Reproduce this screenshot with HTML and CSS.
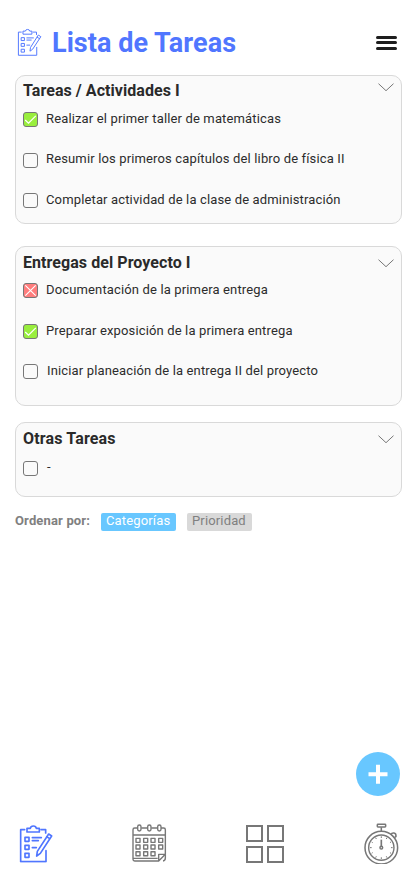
FILE: index.html
```html
<!DOCTYPE html>
<html lang="es">
<head>
<meta charset="utf-8">
<meta name="viewport" content="width=device-width">
<title>Lista de Tareas</title>
<link rel="stylesheet" href="styles.css">
</head>
<body>
<svg class="defs" width="0" height="0">
  <symbol id="clipboard" viewBox="26 26 102 116">
    <g fill="none" stroke="currentColor" stroke-linejoin="round" stroke-linecap="round">
      <path d="M43 43H31V139H107V106M92 43H106V53"/>
      <path d="M50 50V39H60Q61 32 69 32T78 39H87V50Z"/>
      <path d="M44 66h12v12h-12zM44 90h12v12h-12zM44 114h12v12h-12z"/>
      <path d="M66 67H93M66 76H84M66 97H78"/>
      <path d="M115 56L124 62L90 114L79 122L81 108ZM109 64L118 70"/>
    </g>
  </symbol>
  <symbol id="chevron" viewBox="0 0 16 9"><path d="M.5 .7L8 7.7L15.5 .7" fill="none" stroke="#777" stroke-width="1"/></symbol>
  <symbol id="check" viewBox="0 0 15 15"><path d="M2.2 8L5.5 11.2L12.8 3.8" fill="none" stroke="#fff" stroke-width="1.2"/></symbol>
  <symbol id="cross" viewBox="0 0 15 15"><path d="M2.3 2.3L12.7 12.7M12.7 2.3L2.3 12.7" fill="none" stroke="#fff" stroke-width="1.1"/></symbol>
</svg>
<div class="screen">
  <header class="top">
    <svg class="logo"><use href="#clipboard"/></svg>
    <h1>Lista de Tareas</h1>
    <div class="menu"><i></i><i></i><i></i></div>
  </header>

  <section class="card first">
    <div class="head"><h2>Tareas / Actividades I</h2><svg class="chev"><use href="#chevron"/></svg></div>
    <div class="row"><span class="box done"><svg><use href="#check"/></svg></span><p>Realizar el primer taller de matemáticas</p></div>
    <div class="row"><span class="box"></span><p>Resumir los primeros capítulos del libro de física II</p></div>
    <div class="row"><span class="box"></span><p>Completar actividad de la clase de administración</p></div>
  </section>

  <section class="card second">
    <div class="head"><h2>Entregas del Proyecto I</h2><svg class="chev"><use href="#chevron"/></svg></div>
    <div class="row"><span class="box failed"><svg><use href="#cross"/></svg></span><p>Documentación de la primera entrega</p></div>
    <div class="row"><span class="box done"><svg><use href="#check"/></svg></span><p>Preparar exposición de la primera entrega</p></div>
    <div class="row indent"><span class="box"></span><p>Iniciar planeación de la entrega II del proyecto</p></div>
  </section>

  <section class="card third">
    <div class="head"><h2>Otras Tareas</h2><svg class="chev"><use href="#chevron"/></svg></div>
    <div class="row indent"><span class="box"></span><p>-</p></div>
  </section>

  <div class="sort">
    <b>Ordenar por:</b>
    <span class="chip active">Categorías</span>
    <span class="chip">Prioridad</span>
  </div>

  <div class="add"><svg viewBox="0 0 44 44"><path d="M22 12.7V31.7M12.5 22.2H31.5" stroke="#fff" stroke-width="4"/></svg></div>

  <nav class="tabs">
    <svg class="tab-list"><use href="#clipboard"/></svg>
    <svg class="tab-cal" viewBox="35 28 104 116">
      <g fill="none" stroke="#777" stroke-width="4.2" stroke-linejoin="round">
        <path d="M51 40H43Q38 40 38 45V134Q38 139 43 139H115L135 119V45Q135 40 130 40H122M63 40H81M93 40H111M38 61H135M38 131H112M115 139V119H135"/>
        <rect x="52" y="31" width="10" height="18" rx="5"/><rect x="82" y="31" width="10" height="18" rx="5"/><rect x="112" y="31" width="10" height="18" rx="5"/>
        <path d="M47 71h12v12h-12zM70 71h12v12h-12zM92 71h12v12h-12zM115 71h12v12h-12zM47 91h12v12h-12zM70 91h12v12h-12zM92 91h12v12h-12zM115 91h12v12h-12zM47 111h12v12h-12zM70 111h12v12h-12zM92 111h12v12h-12z"/>
        <path d="M128 139Q135 138 135 130V119"/>
      </g>
    </svg>
    <div class="tab-grid"><i></i><i></i><i></i><i></i></div>
    <svg class="tab-timer" viewBox="28 24 106 124">
      <g fill="none" stroke="#777" stroke-width="4.6">
        <circle cx="80" cy="98" r="49"/><circle cx="80" cy="98" r="38" stroke-width="4.2"/>
        <rect x="68" y="28" width="25" height="8" rx="2"/>
        <path d="M80 37V49M109 59Q111 53 118 54T124 65L119 68"/>
        <path d="M80 64V69M80 127V132M46 98H51M109 98H114M63 68L65 72M97 68L95 72M51 81L54 83M109 81L106 83M51 115L54 113M109 115L106 113M63 128L65 124M97 128L95 124" stroke-width="3"/>
        <path d="M80 74V94" stroke-width="5"/><circle cx="80" cy="98" r="4"/>
      </g>
    </svg>
  </nav>
</div>
</body>
</html>
```

FILE: styles.css
```css
* { box-sizing: border-box; margin: 0; padding: 0; }
body { background: #fff; font-family: Roboto, "Liberation Sans", sans-serif; }
.defs { display: block; }
.screen { width: 414px; height: 896px; display: flex; flex-direction: column; overflow: hidden; }
svg { display: block; flex: none; }

.top { height: 75px; padding: 28px 17px 0 17px; display: flex; align-items: flex-start; }
.logo { width: 25px; height: 28px; color: #5076ff; stroke-width: 4; }
h1 { margin-left: 10px; font-size: 27px; line-height: 30px; letter-spacing: .04px; font-weight: 700; color: #5076ff; white-space: nowrap; }
.menu { margin-left: auto; padding-top: 7.5px; width: 21px; display: flex; flex-direction: column; gap: 2.5px; }
.menu i { height: 3.2px; border-radius: 2px; background: #1e1e1e; }

.card { flex: none; margin: 0 12px 0 15px; border: 1px solid #d9d9d9; border-radius: 10px; background: #fafafa; padding: 0 7px; }
.first { height: 149px; }
.second { height: 160px; margin-top: 22px; }
.third { height: 75px; margin-top: 16px; }
.head { height: 34px; padding-top: 5px; display: flex; justify-content: space-between; }
.second .head { height: 34px; padding-top: 6px; }
.third .head { height: 33px; padding-top: 6px; }
h2 { font-size: 16px; line-height: 20px; letter-spacing: .06px; font-weight: 700; color: #2a2a2a; white-space: nowrap; }
.third h2 { letter-spacing: .15px; }
.chev { width: 16px; height: 9px; margin-top: 2px; }
.second .chev, .third .chev { margin-top: 6px; }
.row { height: 40.4px; display: flex; align-items: flex-start; }
.second .row { height: 40.7px; }
.box { flex: none; width: 15px; height: 15px; margin-top: 2.5px; border: 1px solid #777; border-radius: 3px; }
.first .row:nth-child(2) .box, .second .box { margin-top: 2px; }
.third .box { margin-top: 5px; }
.box svg { width: 15px; height: 15px; margin: -1px; }
.done { background: #99ee3d; }
.failed { background: #ff7d7d; }
.row p { margin-left: 8px; font-size: 13px; line-height: 17px; letter-spacing: .145px; color: #2c2c2c; white-space: nowrap; }
.indent p { margin-left: 9px; }
.third .row p { line-height: 21px; }

.sort { flex: none; height: 35px; margin: 16px 0 0 15px; display: flex; align-items: flex-start; font-size: 13px; letter-spacing: .15px; color: #808080; white-space: nowrap; }
.sort b { width: 86px; line-height: 16px; }
.chip { width: 75px; height: 18px; border-radius: 2px; padding-left: 5px; line-height: 16px; background: #d9d9d9; }
.chip.active { background: #68c7ff; color: #fff; margin-right: 11px; }
.chip:last-child { width: 65px; }

.add { flex: none; margin: auto 14px 28px auto; width: 44px; height: 44px; border-radius: 50%; background: #68c7ff; }
.tabs { flex: none; height: 72px; display: flex; align-items: flex-start; padding: 0 15px 0 18.5px; justify-content: space-between; }
.tab-list { width: 34px; height: 38.7px; color: #5076ff; stroke-width: 5; }
.tab-cal { width: 34.7px; height: 38.7px; }
.tab-grid { width: 38px; margin-top: 1px; display: grid; grid-template-columns: 17px 17px; gap: 4px; }
.tab-grid i { height: 17px; border: 2.5px solid #777; }
.tab-timer { width: 35.3px; height: 41.3px; margin-top: -1px; }
```
